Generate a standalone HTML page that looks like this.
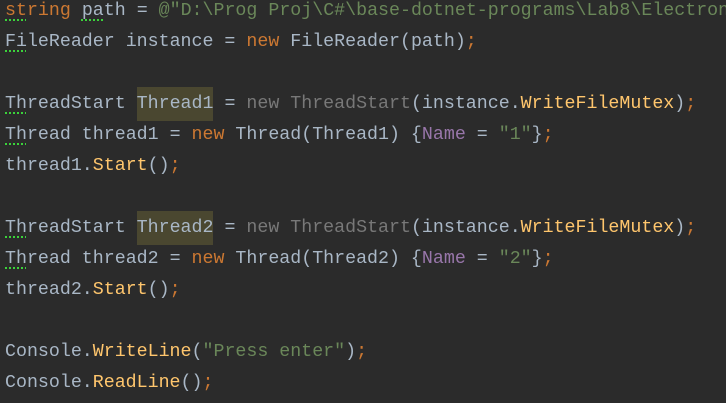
<!DOCTYPE html>
<html><head><style>
html,body{margin:0;padding:0;background:#2b2b2b;width:726px;height:403px;overflow:hidden}
pre{margin:0;position:absolute;left:5px;top:-4px;font-family:"Liberation Mono",monospace;font-size:18.3px;line-height:31px;color:#a9b7c6;white-space:pre}
.k{color:#cc7832}.s{color:#6a8759}.m{color:#ffc66d}.g{color:#787878}.p{color:#9876aa}
.h{background:#4a4730;box-shadow:0 -7px 0 #4a4730,0 7px 0 #4a4730}
.u{text-decoration:underline dotted #3bd33b;text-decoration-thickness:2px;text-underline-offset:4px}
</style></head><body><pre><span class="k"><span class="u">st</span>ring</span> <span class="u">pa</span>th = <span class="s">@"D:\Prog Proj\C#\base-dotnet-programs\Lab8\Electron</span>
<span class="u">Fi</span>leReader instance = <span class="k">new</span> FileReader(path)<span class="k">;</span>

<span class="u">Th</span>readStart <span class="h">Thread1</span> = <span class="g">new ThreadStart</span>(instance.<span class="m">WriteFileMutex</span>)<span class="k">;</span>
<span class="u">Th</span>read thread1 = <span class="k">new</span> Thread(Thread1) {<span class="p">Name</span> = <span class="s">"1"</span>}<span class="k">;</span>
thread1.<span class="m">Start</span>()<span class="k">;</span>

<span class="u">Th</span>readStart <span class="h">Thread2</span> = <span class="g">new ThreadStart</span>(instance.<span class="m">WriteFileMutex</span>)<span class="k">;</span>
<span class="u">Th</span>read thread2 = <span class="k">new</span> Thread(Thread2) {<span class="p">Name</span> = <span class="s">"2"</span>}<span class="k">;</span>
thread2.<span class="m">Start</span>()<span class="k">;</span>

Console.<span class="m">WriteLine</span>(<span class="s">"Press enter"</span>)<span class="k">;</span>
Console.<span class="m">ReadLine</span>()<span class="k">;</span>
</pre></body></html>
